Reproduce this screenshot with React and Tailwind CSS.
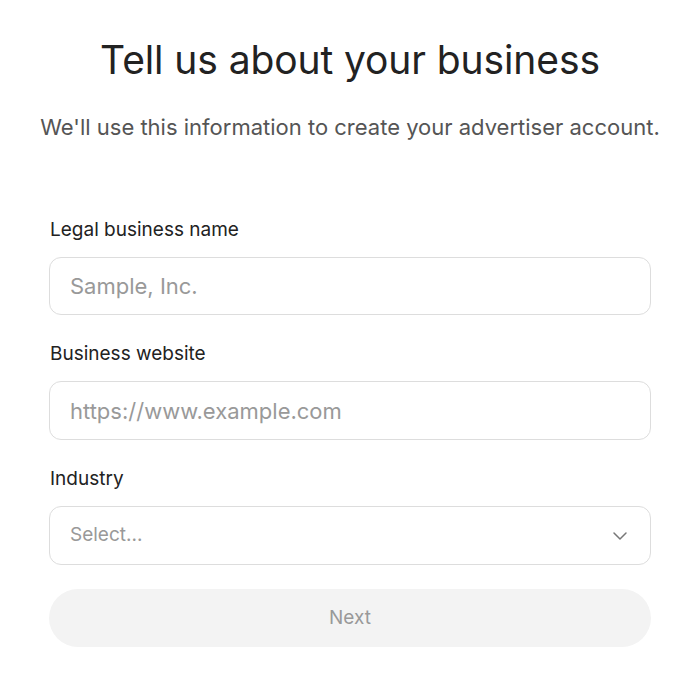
import { ChevronDown } from 'lucide-react';

export default function App() {
  return (
    <div className="min-h-screen bg-white" style={{ fontFamily: 'Inter, "Noto Sans", sans-serif' }}>
      <div className="w-[700px] mx-auto pt-[36px]">
        <h1 className="text-center text-[39px] leading-[48px] text-[#222222] tracking-[-0.1px]">
          Tell us about your business
        </h1>
        <p className="mt-[28px] text-center text-[22px] leading-[30px] text-[#555555]">
          We'll use this information to create your advertiser account.
        </p>

        <div className="mx-[49px] mt-[75px]">
          <label className="block pl-[1px] text-[19px] leading-[26px] text-[#222222]">Legal business name</label>
          <input
            className="mt-[14px] w-full h-[58px] rounded-[12px] border border-[#dddddd] px-[20px] text-[22px] text-[#222222] placeholder:text-[#999999] outline-none"
            placeholder="Sample, Inc."
          />

          <label className="block mt-[26px] pl-[1px] text-[19px] leading-[26px] text-[#222222]">Business website</label>
          <input
            className="mt-[14px] w-full h-[59px] rounded-[12px] border border-[#dddddd] px-[20px] text-[22px] text-[#222222] placeholder:text-[#999999] outline-none"
            placeholder="https://www.example.com"
          />

          <label className="block mt-[26px] pl-[1px] text-[19px] leading-[26px] text-[#222222]">Industry</label>
          <div className="mt-[14px] w-full h-[59px] rounded-[12px] border border-[#dddddd] px-[20px] flex items-center justify-between">
            <span className="text-[19px] text-[#999999]">Select...</span>
            <ChevronDown size={24} strokeWidth={1.5} className="text-[#777777] -mr-[2px]" />
          </div>

          <button className="mt-[24px] w-full h-[58px] rounded-full bg-[#f3f3f3] text-[19px] text-[#999999]">
            Next
          </button>
        </div>
      </div>
    </div>
  );
}
